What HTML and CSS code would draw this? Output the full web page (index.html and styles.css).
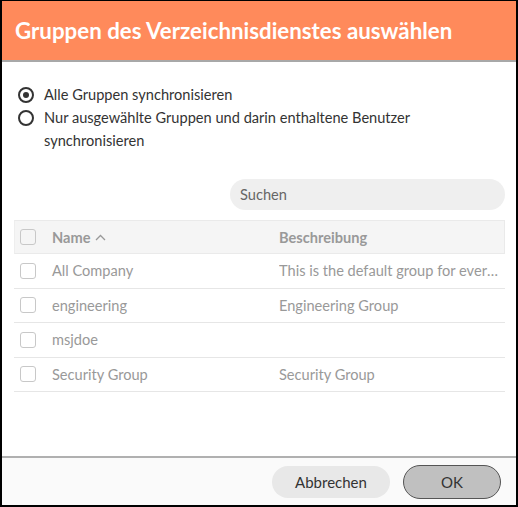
FILE: index.html
```html
<!DOCTYPE html>
<html lang="de">
<head>
<meta charset="utf-8">
<link rel="stylesheet" href="styles.css">
</head>
<body>
<div class="dialog">
  <header class="head"><h1>Gruppen des Verzeichnisdienstes auswählen</h1></header>
  <main class="content">
    <div class="radios">
      <label class="radio"><span class="dot on"></span><span class="rtext">Alle Gruppen synchronisieren</span></label>
      <label class="radio"><span class="dot"></span><span class="rtext">Nur ausgewählte Gruppen und darin enthaltene Benutzer synchronisieren</span></label>
    </div>
    <div class="searchrow"><div class="search">Suchen</div></div>
    <div class="table">
      <div class="row th">
        <span class="cb"></span>
        <span class="c1">Name <svg class="caret" width="11" height="7" viewBox="0 0 11 7"><path d="M1 6 L5.5 1.5 L10 6" fill="none" stroke="#999" stroke-width="1.3"/></svg></span>
        <span class="c2">Beschreibung</span>
      </div>
      <div class="row"><span class="cb"></span><span class="c1">All Company</span><span class="c2">This is the default group for everyone</span></div>
      <div class="row"><span class="cb"></span><span class="c1">engineering</span><span class="c2">Engineering Group</span></div>
      <div class="row"><span class="cb"></span><span class="c1">msjdoe</span><span class="c2"></span></div>
      <div class="row"><span class="cb"></span><span class="c1">Security Group</span><span class="c2">Security Group</span></div>
    </div>
  </main>
  <footer class="foot">
    <button class="btn cancel">Abbrechen</button>
    <button class="btn ok">OK</button>
  </footer>
</div>
</body>
</html>
```
FILE: styles.css
```css
html, body { margin: 0; padding: 0; background: #000; }
body { font-family: Lato, "Liberation Sans", sans-serif; }
.dialog {
  width: 514px; height: 504px;
  margin: 1px 2px 2px 2px;
  background: #fff;
  display: flex; flex-direction: column;
}
.head {
  height: 59px;
  background: #ff8a5b;
  border-bottom: 2px solid #a8a8a8;
  display: flex; align-items: center;
  padding-left: 13px;
  box-sizing: content-box;
}
.head h1 { margin: 0; color: #fff; font-size: 22.3px; font-weight: 700; letter-spacing: 0; }
.content { flex: 1; padding: 21px 12px 0 12px; }
.radios { display: flex; flex-direction: column; gap: 0; }
.radio { display: flex; align-items: flex-start; gap: 10px; font-size: 14.6px; color: #333; line-height: 23px; padding-left: 4px; }
.rtext { max-width: 400px; }
.dot { flex: none; width: 12px; height: 12px; border: 2px solid #333; border-radius: 50%; margin-top: 3.5px; position: relative; }
.dot.on::after { content: ""; position: absolute; left: 3px; top: 3px; width: 6px; height: 6px; border-radius: 50%; background: #333; }
.searchrow { display: flex; justify-content: flex-end; margin-top: 27px; }
.search { width: 265px; height: 31px; border-radius: 16px; background: #efefef; color: #666; font-size: 14.6px; line-height: 31px; padding-left: 10px; margin-right: -1px; }
.table { margin-top: 10px; margin-right: -1px; }
.row { display: flex; align-items: center; height: 34.5px; box-sizing: border-box; border-bottom: 1px solid #e6e6e6; font-size: 14.6px; color: #999; }
.row.th { background: #f5f5f5; border: 1px solid #eaeaea; border-left-color: #eee; height: 34px; font-weight: 700; }
.cb { flex: none; width: 14px; height: 14px; border: 1px solid #c8c8c8; border-radius: 3px; margin-left: 6px; background: #fff; }
.row.th .cb { margin-left: 5px; background: transparent; }
.c1 { width: 227px; padding-left: 16px; flex: none; display: flex; align-items: center; gap: 5px; white-space: nowrap; }
.c2 { flex: 1; min-width: 0; white-space: nowrap; overflow: hidden; text-overflow: ellipsis; padding-right: 4px; }
.caret { margin-top: 1px; }
.foot {
  height: 47px;
  background: #fafafa;
  border-top: 2px solid #b0b0b0;
  display: flex; align-items: center; justify-content: flex-end;
  gap: 13px; padding-right: 15px;
}
.btn { font-family: inherit; font-size: 15px; color: #333; border-radius: 17px; cursor: pointer; }
.cancel { width: 118px; height: 32px; background: #e8e8e8; border: none; }
.ok { width: 98px; height: 34px; background: #c0c0c0; border: 1px solid #555; }
```
